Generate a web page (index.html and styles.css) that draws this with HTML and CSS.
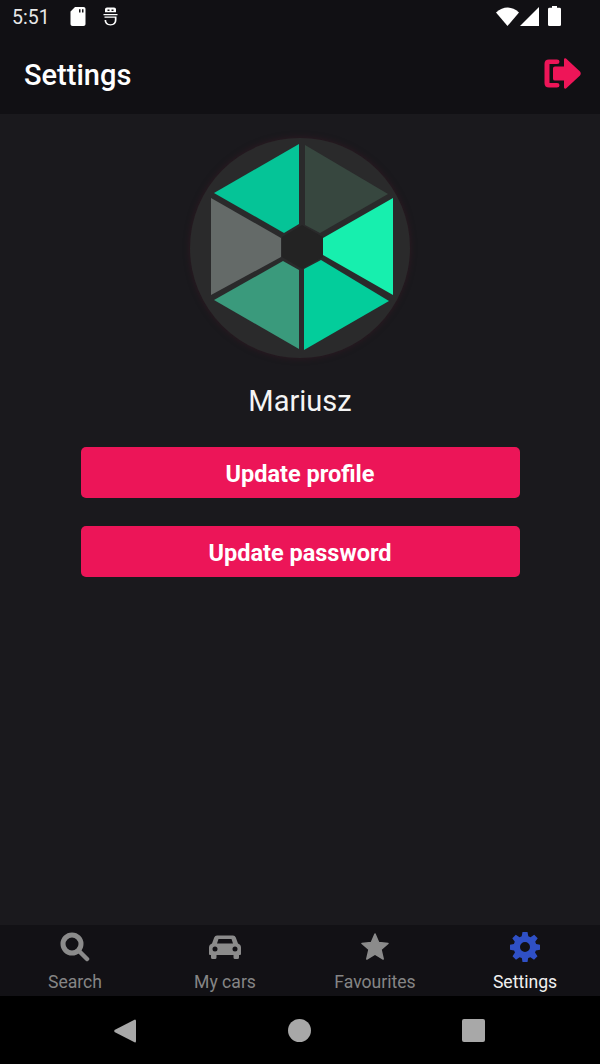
FILE: index.html
```html
<!DOCTYPE HTML>
<html>
<head>
<meta charset="utf-8">
<title>Settings</title>
<link rel="stylesheet" href="styles.css">
</head>

<body>
<div class="top">
  <div class="status">
    <span class="time">5:51</span>
    <svg class="sd" viewBox="0 0 16 21" preserveAspectRatio="none"><path d="M5 0H13.500A2 2 0 0 1 15.500 2V19A2 2 0 0 1 13.500 21H2.500A2 2 0 0 1 .5 19V5Z M9 2.500V6H10.500V2.500Z M12 2.500V6H13.500V2.500Z" fill-rule="evenodd"/></svg>
    <svg class="droid" viewBox="0 0 15 22" preserveAspectRatio="none"><path d="M2 2.500Q2 .5 4 .5H11Q13 .5 13 2.500V6H2Z M4.500 3V4.500H6.500V3Z M8.500 3V4.500H10.500V3Z" fill-rule="evenodd"/><path d="M.5 8H14.500V9.500H.5Z M1.500 11H13.500V15Q13.500 21 7.500 21.500Q1.500 21 1.500 15H3.200Q3.200 19.500 7.500 20Q11.800 19.500 11.800 15V12.500H1.500Z"/></svg>
    <span class="spring"></span>
    <svg class="wifi" viewBox="0 0 23 21" preserveAspectRatio="none"><path d="M0 6Q11.500 -5 23 6L11.500 21Z"/></svg>
    <svg class="signal" viewBox="0 0 19 21" preserveAspectRatio="none"><path d="M19 0V21H0Z"/></svg>
    <svg class="battery" viewBox="0 0 13 22" preserveAspectRatio="none"><path d="M4 0H9V2H11.500A1.500 1.500 0 0 1 13 3.500V20.500A1.500 1.500 0 0 1 11.500 22H1.500A1.500 1.500 0 0 1 0 20.500V3.500A1.500 1.500 0 0 1 1.500 2H4Z"/></svg>
  </div>
  <div class="header">
    <h1>Settings</h1>
    <svg class="logout" viewBox="0 0 38 33" preserveAspectRatio="none"><path d="M14 4H6Q4 4 4 6V27Q4 29 6 29H14" fill="none" stroke="#ee1558" stroke-width="5" stroke-linecap="round"/><path d="M21 1.500Q21 0 23 .5L37 14.500Q38.500 16.500 37 18.500L23 32.500Q21 33 21 31.500V24H12Q10 24 10 22V11Q10 9 12 9H21Z" fill="#ee1558"/></svg>
  </div>
</div>

<div class="main">
  <div class="avatar">
    <svg class="hex" viewBox="0 0 240 240">
      <polygon points="119,14 119,94 104,103 34,63" fill="#05c497"/>
      <polygon points="125,15 208,64 140,103 125,95" fill="#37473f"/>
      <polygon points="213,68 213,165 143,125 143,108" fill="#17efae"/>
      <polygon points="124,220 124,139 141,130 209,171" fill="#03cd9b"/>
      <polygon points="119,219 119,140 103,131 34,170" fill="#3a9a7c"/>
      <polygon points="31,68 101,108 101,127 31,165" fill="#646a68"/>
      <polygon points="122,95 143,107 143,127 122,139 102,127 102,107" fill="#232323"/>
    </svg>
  </div>
  <div class="name">Mariusz</div>
  <button class="btn">Update profile</button>
  <button class="btn">Update password</button>
</div>

<div class="tabs">
  <div class="tab">
    <svg class="tab-icon" viewBox="0 0 30 30" width="30" height="30"><circle cx="12" cy="12" r="9" fill="none" stroke="#8b8b8b" stroke-width="5"/><path d="M19 19L27 27" stroke="#8b8b8b" stroke-width="4.500" stroke-linecap="round"/></svg>
    <span>Search</span>
  </div>
  <div class="tab">
    <svg class="tab-icon" viewBox="0 0 32 30" width="32" height="30"><path fill-rule="evenodd" fill="#8b8b8b" d="M8 3.500H24Q26 3.500 26.800 5.500L29 11.500Q32 12.500 32 15.500V22Q32 23 31 23H30V25.500Q30 27 28.500 27H26Q24.500 27 24.500 25.500V23H7.500V25.500Q7.500 27 6 27H3.500Q2 27 2 25.500V23H1Q0 23 0 22V15.500Q0 12.500 3 11.500L5.200 5.500Q6 3.500 8 3.500Z M9.500 7L8 11.500H24L22.500 7Z M6 14.500A2.500 2.500 0 1 0 6 19.500A2.500 2.500 0 1 0 6 14.500Z M26 14.500A2.500 2.500 0 1 0 26 19.500A2.500 2.500 0 1 0 26 14.500Z"/></svg>
    <span>My cars</span>
  </div>
  <div class="tab">
    <svg class="tab-icon" viewBox="0 0 28 30" width="28" height="30"><path fill="#8b8b8b" stroke="#8b8b8b" stroke-width="1.500" stroke-linejoin="round" d="M14 2L17.700 10.500L27 11.500L20 17.500L22.200 27L14 22L5.800 27L8 17.500L1 11.500L10.300 10.500Z"/></svg>
    <span>Favourites</span>
  </div>
  <div class="tab active">
    <svg class="tab-icon" viewBox="0 0 30 30" width="30" height="30"><path fill-rule="evenodd" fill="#2f50c6" d="M12.500 0H17.500L18.300 4.300L20.500 5.200L24.200 2.700L27.700 6.200L25.200 9.800L26.100 12L30 12.700V17.700L25.900 18.400L25 20.500L27.500 24.200L24 27.700L20.400 25.200L18.200 26.100L17.500 30H12.500L11.800 26.100L9.600 25.200L6 27.700L2.500 24.200L5 20.500L4.100 18.400L0 17.700V12.700L3.900 12L4.800 9.800L2.300 6.200L5.800 2.700L9.500 5.200L11.700 4.300Z M15 10A5 5 0 1 0 15 20A5 5 0 1 0 15 10Z"/></svg>
    <span>Settings</span>
  </div>
</div>

<div class="nav">
  <svg class="back" viewBox="0 0 22 24"><path d="M21 .5Q22 .5 22 2V22Q22 23.500 21 23.500L.5 13Q0 12 .5 11Z"/></svg>
  <div class="home"></div>
  <div class="recent"></div>
</div>
</body>
</html>
```

FILE: styles.css
```css
body {
  margin:0;
  width:600px;
  height:1064px;
  display:flex;
  flex-direction:column;
  overflow:hidden;
  background:#1a191d;
  color:#fff;
  font-family:Roboto, sans-serif;
}
svg { display:block; fill:#fff; }

.top { background:#111014; height:114px; flex:none; }
.status {
  display:flex;
  align-items:center;
  height:32px;
  padding:0 39px 0 12px;
}
.time { font-size:19.5px; color:#e8e8e8; width:58px; padding-top:2px; }
.sd { width:16px; height:19px; margin-right:17px; }
.droid { width:15px; height:19px; }
.spring { flex:1; }
.wifi { width:23px; height:19px; margin-right:1px; }
.signal { width:19px; height:19px; margin-right:9px; }
.battery { width:13px; height:20px; }

.header {
  display:flex;
  align-items:center;
  justify-content:space-between;
  padding:0 19px 0 24px;
  height:82px;
}
.header h1 {
  margin:4px 0 0;
  font-size:29px;
  font-weight:500;
}
.logout { width:38px; height:31px; }

.main {
  flex:1;
  display:flex;
  flex-direction:column;
  align-items:center;
  padding-top:24px;
}
.avatar {
  width:220px;
  height:220px;
  border-radius:50%;
  background:#2a2a2b;
  box-shadow:0 0 6px rgba(70, 25, 40, .5);
  flex:none;
}
.hex { width:240px; height:240px; margin:-8px -10px -12px; }
.name {
  font-size:29px;
  line-height:32px;
  margin:27px 0 30px;
  color:#f4f4f4;
}
.btn {
  width:439px;
  height:51px;
  border:0;
  border-radius:5px;
  background:#ec1558;
  color:#fff;
  font-family:Roboto, sans-serif;
  font-size:23.5px;
  font-weight:700;
  margin-bottom:28px;
  padding:2px 0 0;
}

.tabs {
  display:flex;
  flex:none;
  height:71px;
  background:#121115;
}
.tab {
  flex:1;
  display:flex;
  flex-direction:column;
  align-items:center;
  padding-top:7px;
  font-size:17.6px;
  color:#858585;
}
.tab-icon { height:30px; margin-bottom:8px; }
.tab span { line-height:24px; }
.tab.active { color:#f0f0f0; }

.nav {
  display:flex;
  flex:none;
  height:68px;
  background:#000;
  align-items:center;
  justify-content:space-between;
  padding:1px 115px 0 114px;
  box-sizing:border-box;
}
.back { width:22px; height:24px; fill:#a8a8a8; }
.home { width:23px; height:23px; border-radius:50%; background:#a8a8a8; }
.recent { width:23px; height:23px; border-radius:2px; background:#a8a8a8; }
```
